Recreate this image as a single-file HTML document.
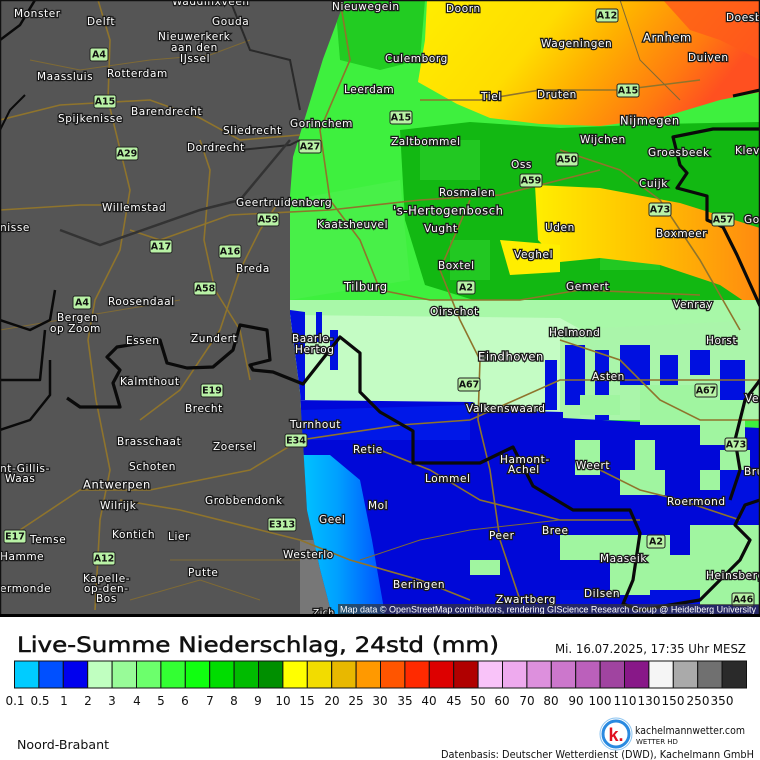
<!DOCTYPE html>
<html><head><meta charset="utf-8"><style>
html,body{margin:0;padding:0;background:#fff;width:760px;height:760px;overflow:hidden}
svg{display:block}
.l{font-family:"DejaVu Sans",sans-serif;font-size:10.5px;fill:#fff;stroke:#1a1a1a;stroke-width:2.6px;paint-order:stroke;letter-spacing:0.6px;dominant-baseline:middle}
.s rect{fill:#b9f2a6;stroke:#222;stroke-width:1}
.s text{font-family:"DejaVu Sans",sans-serif;font-size:9.5px;font-weight:bold;fill:#111;text-anchor:middle;dominant-baseline:middle}
.r{fill:none;stroke:#8f742c;stroke-width:1.6}
.r2{fill:none;stroke:#7f6a35;stroke-width:1}
.b{fill:none;stroke:#0a0a0a;stroke-width:3.2;stroke-linejoin:round}
.t{font-family:"DejaVu Sans",sans-serif;fill:#111}
</style></head><body>
<svg width="760" height="760" viewBox="0 0 760 760" xmlns="http://www.w3.org/2000/svg">
<defs>
<clipPath id="rad"><polygon points="345,0 760,0 760,615 332,615 320,569 307,510 300,392 290,314 290,196 293,157 323,59"/></clipPath>
<linearGradient id="top" x1="0" y1="0" x2="1" y2="0.3">
<stop offset="0" stop-color="#ffee00"/><stop offset="0.4" stop-color="#ffdd00"/><stop offset="0.6" stop-color="#ffb000"/><stop offset="0.85" stop-color="#ff7a10"/><stop offset="1" stop-color="#ff5020"/></linearGradient>
<linearGradient id="band" x1="0" y1="0" x2="1" y2="0">
<stop offset="0" stop-color="#ffee00"/><stop offset="0.5" stop-color="#ffc000"/><stop offset="1" stop-color="#ff8a10"/></linearGradient>
<linearGradient id="cy" x1="0" y1="0" x2="1" y2="0">
<stop offset="0" stop-color="#00d0ff"/><stop offset="0.5" stop-color="#00a0ff"/><stop offset="1" stop-color="#0050ff"/></linearGradient>
</defs>
<rect x="0" y="0" width="760" height="617" fill="#555"/>
<polygon points="300,540 335,540 345,615 300,615" fill="#777"/>
<g clip-path="url(#rad)">
<rect x="280" y="0" width="480" height="615" fill="#3ef03e"/>
<polygon points="335,0 425,0 420,60 380,70 340,60" fill="#22cc22"/>
<polygon points="400,130 470,122 560,128 660,124 760,122 760,312 700,302 640,300 560,302 480,302 425,285 405,220" fill="#12b812"/>
<g fill="#22c822"><rect x="420" y="140" width="60" height="40"/><rect x="600" y="230" width="60" height="40"/><rect x="450" y="240" width="40" height="40"/></g>
<polygon points="290,200 400,180 410,280 290,300" fill="#48f048"/>
<polygon points="427,0 760,0 760,92 720,100 660,118 600,126 540,124 490,118 457,104 418,82 425,40" fill="url(#top)"/>
<polygon points="663,0 760,0 760,60 720,40 690,30" fill="#ff5a1a" opacity="0.8"/>
<polygon points="535,185 600,188 680,203 760,228 760,312 720,285 660,265 600,258 560,262 538,240" fill="url(#band)"/>
<polygon points="500,240 560,245 560,272 510,275" fill="#ffee00"/>
<rect x="290" y="300" width="470" height="60" fill="#a8f8a8"/>
<polygon points="290,315 560,318 600,340 600,412 290,412" fill="#c4fcc4"/>
<polygon points="560,330 760,320 760,420 560,420" fill="#aaf5aa"/>
<polygon points="290,310 305,312 305,400 290,400" fill="#0010e0"/>
<polygon points="290,400 473,402 480,410 563,412 563,418 760,428 760,615 290,615" fill="#0008d8"/>
<polygon points="300,410 470,405 470,440 300,440" fill="#0018e8"/>
<polygon points="290,455 330,455 360,480 372,540 385,615 290,615" fill="url(#cy)"/>
<g fill="#0010e0">
<rect x="565" y="345" width="20" height="60"/><rect x="595" y="350" width="14" height="70"/><rect x="620" y="345" width="30" height="40"/><rect x="660" y="355" width="18" height="60"/><rect x="690" y="350" width="20" height="25"/><rect x="720" y="360" width="25" height="40"/><rect x="545" y="360" width="12" height="50"/><rect x="640" y="395" width="40" height="25"/>
<rect x="330" y="330" width="8" height="40"/><rect x="316" y="312" width="6" height="30"/>
</g>
<g fill="#a0f5a0">
<rect x="580" y="395" width="40" height="20"/><rect x="640" y="385" width="60" height="40"/><rect x="700" y="400" width="45" height="45"/><rect x="575" y="440" width="25" height="35"/><rect x="635" y="440" width="20" height="40"/><rect x="620" y="470" width="45" height="25"/><rect x="700" y="470" width="30" height="20"/>
<rect x="560" y="535" width="110" height="25"/><rect x="690" y="525" width="70" height="80"/><rect x="610" y="555" width="80" height="40"/><rect x="470" y="560" width="30" height="15"/><rect x="720" y="450" width="30" height="30"/>
</g>
<g fill="#0010e0"><rect x="650" y="590" width="50" height="25"/><rect x="720" y="470" width="40" height="50"/><rect x="560" y="590" width="30" height="25"/></g>
</g>
<!-- roads -->
<g class="r">
<path d="M98,0 L110,40 L108,100 L130,190 L120,250 L95,300 L88,340 L96,400 L110,470 L100,520 L95,610"/>
<path d="M0,120 L60,105 L150,100 L200,118 L240,140 L300,135"/>
<path d="M200,140 L210,170 L204,240 L215,290 L240,330 L250,380"/>
<path d="M0,210 L80,205 L120,205"/>
<path d="M130,230 L160,240 L230,215 L330,210 L420,200 L500,195 L600,170"/>
<path d="M20,530 L80,490 L150,490 L250,470 L300,440 L400,425 L470,420 L560,380 L760,380"/>
<path d="M120,500 L180,510 L260,530 L300,540 L350,560 L420,580 L470,600"/>
<path d="M140,420 L180,390 L220,330 L240,270 L260,230 L280,200"/>
<path d="M340,0 L350,60 L320,130 L330,200 L360,240 L380,290 L430,300 L470,300 L520,300 L580,290 L700,295"/>
<path d="M420,100 L480,100 L540,90 L620,90 L700,80"/>
<path d="M470,200 L440,270 L460,320 L480,360 L478,420 L490,470 L500,540 L520,600"/>
<path d="M560,150 L620,170 L660,200 L700,260 L740,330"/>
<path d="M560,340 L620,360 L660,400 L700,420 L760,420"/>
<path d="M600,470 L640,490 L680,500 L740,520"/>
<path d="M380,450 L430,470 L480,500 L560,520 L640,520"/>
</g>
<g class="r2">
<path d="M30,60 L80,70 L150,60 L210,55 L250,40"/>
<path d="M0,330 L60,320 L120,310 L180,300"/>
<path d="M130,600 L200,580 L260,600"/>
<path d="M170,560 L230,560 L300,560"/>
<path d="M360,560 L420,540 L470,530 L560,520"/>
<path d="M620,0 L640,60 L680,100"/>
</g>
<!-- borders -->
<g class="b">
<path d="M67,398 L80,407 L120,407 L113,383 L120,370 L107,357 L117,347 L160,340 L167,363 L187,368 L213,367 L233,350 L240,325 L267,330 L270,360 L250,365 L253,370 L273,372 L293,380 L303,384 L340,337 L360,353 L360,392 L380,412 L413,431 L413,463 L480,463 L513,447 L533,486 L573,510 L630,510 L640,533 L633,580 L623,604 L640,610 L700,600 L725,575 L740,560 L750,540 L735,525 L745,505 L760,500"/>
<path d="M760,129 L713,129 L673,137 L680,165 L687,173 L677,188 L707,196 L707,220 L723,227 L737,255 L760,306"/>
<path d="M733,96 L760,90"/>
<path d="M760,380 L745,400 L735,440 L740,470 L730,500"/>
<path d="M0,130 L10,110 L25,95" stroke-width="2"/>
<path d="M0,430 L30,420 L50,395 L50,360" stroke-width="2.5"/>
<path d="M0,380 L40,380 L45,330" stroke-width="2.5"/>
<path d="M0,320 L30,330 L50,320 L55,290" stroke-width="2.5"/>
<path d="M35,0 L20,25 L0,40" stroke-width="2.5"/>
</g>
<path d="M230,0 L250,50 L290,60 L300,110" fill="none" stroke="#2a2a2a" stroke-width="2"/>
<path d="M240,150 L290,145 L300,140" fill="none" stroke="#2a2a2a" stroke-width="2"/>
<path d="M60,230 L100,245 L200,210 L240,200 L290,140" fill="none" stroke="#333" stroke-width="2.5"/>
<!-- labels -->
<g class="l">
<text x="14" y="14">Monster</text><text x="87" y="22">Delft</text><text x="212" y="22">Gouda</text><text x="172" y="2">Waddinxveen</text>
<text x="158" y="37">Nieuwerkerk</text><text x="171" y="48">aan den</text><text x="180" y="59">IJssel</text>
<text x="37" y="77">Maassluis</text><text x="107" y="74">Rotterdam</text><text x="131" y="112">Barendrecht</text><text x="58" y="119">Spijkenisse</text>
<text x="223" y="131">Sliedrecht</text><text x="187" y="148">Dordrecht</text><text x="102" y="208">Willemstad</text><text x="236" y="203">Geertruidenberg</text>
<text x="0" y="228">nisse</text><text x="236" y="269">Breda</text><text x="108" y="302">Roosendaal</text>
<text x="57" y="318">Bergen</text><text x="50" y="329">op Zoom</text><text x="126" y="341">Essen</text><text x="191" y="339">Zundert</text>
<text x="120" y="382">Kalmthout</text><text x="185" y="409">Brecht</text><text x="117" y="442">Brasschaat</text><text x="213" y="447">Zoersel</text>
<text x="129" y="467">Schoten</text><text x="83" y="485" style="font-size:11.5px">Antwerpen</text><text x="100" y="506">Wilrijk</text><text x="205" y="501">Grobbendonk</text>
<text x="112" y="535">Kontich</text><text x="168" y="537">Lier</text><text x="30" y="540">Temse</text><text x="0" y="557">Hamme</text>
<text x="283" y="555">Westerlo</text><text x="188" y="573">Putte</text><text x="83" y="579">Kapelle-</text><text x="84" y="589">op-den-</text><text x="96" y="599">Bos</text>
<text x="0" y="589">ermonde</text><text x="0" y="469">nt-Gillis-</text><text x="5" y="479">Waas</text>
<text x="292" y="339">Baarle-</text><text x="295" y="350">Hertog</text><text x="290" y="425">Turnhout</text><text x="319" y="520">Geel</text>
<text x="332" y="7">Nieuwegein</text><text x="446" y="9">Doorn</text><text x="726" y="18">Doesb</text><text x="541" y="44">Wageningen</text>
<text x="643" y="38" style="font-size:11.5px">Arnhem</text><text x="688" y="58">Duiven</text><text x="385" y="59">Culemborg</text><text x="344" y="90">Leerdam</text>
<text x="481" y="97">Tiel</text><text x="537" y="95">Druten</text><text x="290" y="124">Gorinchem</text><text x="391" y="142">Zaltbommel</text>
<text x="620" y="121" style="font-size:11.5px">Nijmegen</text><text x="580" y="140">Wijchen</text><text x="648" y="153">Groesbeek</text><text x="735" y="151">Kleve</text>
<text x="511" y="165">Oss</text><text x="639" y="184">Cuijk</text><text x="439" y="193">Rosmalen</text><text x="393" y="211" style="font-size:11.5px">'s-Hertogenbosch</text>
<text x="744" y="220">Go</text><text x="317" y="225">Kaatsheuvel</text><text x="424" y="229">Vught</text><text x="545" y="228">Uden</text><text x="656" y="234">Boxmeer</text>
<text x="514" y="255">Veghel</text><text x="438" y="266">Boxtel</text><text x="344" y="287" style="font-size:11.5px">Tilburg</text><text x="566" y="287">Gemert</text>
<text x="673" y="305">Venray</text><text x="430" y="312">Oirschot</text><text x="549" y="333">Helmond</text><text x="706" y="341">Horst</text>
<text x="478" y="357" style="font-size:11.5px">Eindhoven</text><text x="592" y="377">Asten</text><text x="745" y="399">Ve</text><text x="466" y="409">Valkenswaard</text>
<text x="500" y="460">Hamont-</text><text x="508" y="470">Achel</text><text x="576" y="466">Weert</text><text x="425" y="479">Lommel</text><text x="353" y="450">Retie</text>
<text x="744" y="472">Bru</text><text x="667" y="502">Roermond</text><text x="368" y="506">Mol</text><text x="489" y="536">Peer</text><text x="542" y="531">Bree</text>
<text x="600" y="559">Maaseik</text><text x="706" y="576">Heinsberg</text><text x="393" y="585">Beringen</text><text x="584" y="594">Dilsen</text><text x="496" y="600">Zwartberg</text>
</g>
<g class="s">
<rect x="90" y="48" width="18" height="13" rx="2"/><text x="99" y="55">A4</text>
<rect x="94" y="95" width="22" height="13" rx="2"/><text x="105" y="102">A15</text>
<rect x="116" y="147" width="22" height="13" rx="2"/><text x="127" y="154">A29</text>
<rect x="150" y="240" width="22" height="13" rx="2"/><text x="161" y="247">A17</text>
<rect x="219" y="245" width="22" height="13" rx="2"/><text x="230" y="252">A16</text>
<rect x="257" y="213" width="22" height="13" rx="2"/><text x="268" y="220">A59</text>
<rect x="194" y="282" width="22" height="13" rx="2"/><text x="205" y="289">A58</text>
<rect x="73" y="296" width="18" height="13" rx="2"/><text x="82" y="303">A4</text>
<rect x="201" y="384" width="22" height="13" rx="2"/><text x="212" y="391">E19</text>
<rect x="4" y="530" width="22" height="13" rx="2"/><text x="15" y="537">E17</text>
<rect x="268" y="518" width="28" height="13" rx="2"/><text x="282" y="525">E313</text>
<rect x="93" y="552" width="22" height="13" rx="2"/><text x="104" y="559">A12</text>
<rect x="285" y="434" width="22" height="13" rx="2"/><text x="296" y="441">E34</text>
<rect x="596" y="9" width="22" height="13" rx="2"/><text x="607" y="16">A12</text>
<rect x="617" y="84" width="22" height="13" rx="2"/><text x="628" y="91">A15</text>
<rect x="390" y="111" width="22" height="13" rx="2"/><text x="401" y="118">A15</text>
<rect x="299" y="140" width="22" height="13" rx="2"/><text x="310" y="147">A27</text>
<rect x="556" y="153" width="22" height="13" rx="2"/><text x="567" y="160">A50</text>
<rect x="520" y="174" width="22" height="13" rx="2"/><text x="531" y="181">A59</text>
<rect x="649" y="203" width="22" height="13" rx="2"/><text x="660" y="210">A73</text>
<rect x="712" y="213" width="22" height="13" rx="2"/><text x="723" y="220">A57</text>
<rect x="457" y="281" width="18" height="13" rx="2"/><text x="466" y="288">A2</text>
<rect x="458" y="378" width="22" height="13" rx="2"/><text x="469" y="385">A67</text>
<rect x="695" y="384" width="22" height="13" rx="2"/><text x="706" y="391">A67</text>
<rect x="725" y="438" width="22" height="13" rx="2"/><text x="736" y="445">A73</text>
<rect x="647" y="535" width="18" height="13" rx="2"/><text x="656" y="542">A2</text>
<rect x="732" y="593" width="22" height="13" rx="2"/><text x="743" y="600">A46</text>
</g>
<rect x="338" y="604" width="422" height="11" fill="#333" opacity="0.7"/>
<text x="340" y="612.5" font-family="Liberation Sans,sans-serif" font-size="9" fill="#fff" textLength="416">Map data © OpenStreetMap contributors, rendering GIScience Research Group @ Heidelberg University</text>
<text x="313" y="613" class="l" style="font-size:9px">Zich</text>
<rect x="0.5" y="0.5" width="759" height="615" fill="none" stroke="#111" stroke-width="1.5"/>
<rect x="0" y="614" width="760" height="3" fill="#000"/>
<!-- bottom panel -->
<text class="t" x="17" y="652" font-size="21" stroke="#111" stroke-width="0.5" textLength="482" lengthAdjust="spacingAndGlyphs">Live-Summe Niederschlag, 24std (mm)</text>
<text class="t" x="555" y="653" font-size="12" textLength="191" lengthAdjust="spacingAndGlyphs">Mi. 16.07.2025, 17:35 Uhr MESZ</text>
<g stroke="#111" stroke-width="1">
<rect x="14.5" y="661" width="24.4" height="27" fill="#00ccff"/>
<rect x="38.9" y="661" width="24.4" height="27" fill="#0050ff"/>
<rect x="63.3" y="661" width="24.4" height="27" fill="#0000ee"/>
<rect x="87.7" y="661" width="24.4" height="27" fill="#c0ffc0"/>
<rect x="112.1" y="661" width="24.4" height="27" fill="#98fb98"/>
<rect x="136.5" y="661" width="24.4" height="27" fill="#6cff6c"/>
<rect x="160.9" y="661" width="24.4" height="27" fill="#33ff33"/>
<rect x="185.3" y="661" width="24.4" height="27" fill="#10ff10"/>
<rect x="209.7" y="661" width="24.4" height="27" fill="#00dd00"/>
<rect x="234.1" y="661" width="24.4" height="27" fill="#00bb00"/>
<rect x="258.5" y="661" width="24.4" height="27" fill="#008f00"/>
<rect x="282.9" y="661" width="24.4" height="27" fill="#ffff00"/>
<rect x="307.3" y="661" width="24.4" height="27" fill="#f2dc00"/>
<rect x="331.7" y="661" width="24.4" height="27" fill="#e8b800"/>
<rect x="356.1" y="661" width="24.4" height="27" fill="#ff9900"/>
<rect x="380.5" y="661" width="24.4" height="27" fill="#ff5500"/>
<rect x="404.9" y="661" width="24.4" height="27" fill="#ff2a00"/>
<rect x="429.3" y="661" width="24.4" height="27" fill="#dd0000"/>
<rect x="453.7" y="661" width="24.4" height="27" fill="#b00000"/>
<rect x="478.1" y="661" width="24.4" height="27" fill="#f9c3f9"/>
<rect x="502.5" y="661" width="24.4" height="27" fill="#eeaaee"/>
<rect x="526.9" y="661" width="24.4" height="27" fill="#dd90dd"/>
<rect x="551.3" y="661" width="24.4" height="27" fill="#cc77cc"/>
<rect x="575.7" y="661" width="24.4" height="27" fill="#bb60bb"/>
<rect x="600.1" y="661" width="24.4" height="27" fill="#a044a0"/>
<rect x="624.5" y="661" width="24.4" height="27" fill="#881888"/>
<rect x="648.9" y="661" width="24.4" height="27" fill="#f5f5f5"/>
<rect x="673.3" y="661" width="24.4" height="27" fill="#aaaaaa"/>
<rect x="697.7" y="661" width="24.4" height="27" fill="#707070"/>
<rect x="722.1" y="661" width="24.4" height="27" fill="#2a2a2a"/>
</g>
<g class="t" font-size="12" text-anchor="middle">
<text x="15" y="705">0.1</text><text x="40" y="705">0.5</text><text x="64" y="705">1</text><text x="88" y="705">2</text><text x="112" y="705">3</text><text x="137" y="705">4</text><text x="161" y="705">5</text><text x="185" y="705">6</text><text x="210" y="705">7</text><text x="234" y="705">8</text><text x="258" y="705">9</text><text x="283" y="705">10</text><text x="307" y="705">15</text><text x="332" y="705">20</text><text x="356" y="705">25</text><text x="380" y="705">30</text><text x="405" y="705">35</text><text x="429" y="705">40</text><text x="454" y="705">45</text><text x="478" y="705">50</text><text x="502" y="705">60</text><text x="527" y="705">70</text><text x="551" y="705">80</text><text x="576" y="705">90</text><text x="600" y="705">100</text><text x="625" y="705">110</text><text x="649" y="705">130</text><text x="673" y="705">150</text><text x="698" y="705">250</text><text x="722" y="705">350</text>
</g>
<text class="t" x="17" y="749" font-size="12" textLength="92" lengthAdjust="spacingAndGlyphs">Noord-Brabant</text>
<circle cx="616" cy="734" r="13" fill="#fff" stroke="#2a8ae0" stroke-width="3"/>
<circle cx="616" cy="734" r="16" fill="none" stroke="#8cc4f0" stroke-width="1"/>
<text x="616" y="741" font-family="Liberation Sans,sans-serif" font-weight="bold" font-size="18" fill="#e01020" text-anchor="middle">k.</text>
<text class="t" x="635" y="734" font-size="10.5" textLength="110" lengthAdjust="spacingAndGlyphs">kachelmannwetter.com</text>
<text class="t" x="636" y="744" font-size="7" fill="#444">WETTER HD</text>
<text class="t" x="441" y="758" font-size="11" textLength="313" lengthAdjust="spacingAndGlyphs">Datenbasis: Deutscher Wetterdienst (DWD), Kachelmann GmbH</text>
</svg>
</body></html>
